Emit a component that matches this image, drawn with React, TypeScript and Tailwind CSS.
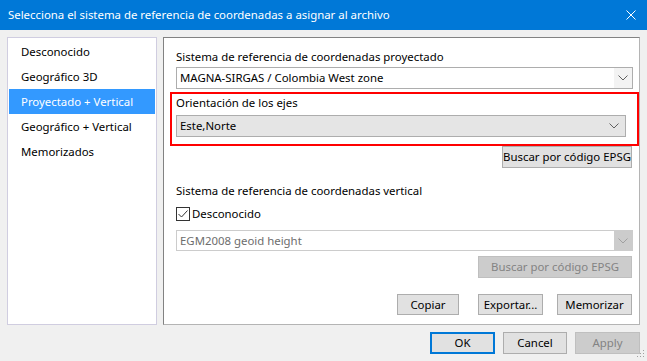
import React from 'react';

const items = ['Desconocido', 'Geográfico 3D', 'Proyectado + Vertical', 'Geográfico + Vertical', 'Memorizados'];

function Chevron({ color = '#606060' }: { color?: string }) {
  return (
    <svg width="10" height="6" viewBox="0 0 10 6" fill="none">
      <path d="M0.5 0.5 L5 5 L9.5 0.5" stroke={color} strokeWidth="1" />
    </svg>
  );
}

function Button({ label, className = '', disabled = false, focused = false }: { label: string; className?: string; disabled?: boolean; focused?: boolean }) {
  return (
    <div
      className={
        'flex items-center justify-center whitespace-nowrap ' +
        (focused ? 'border-2 border-[#0078d7] bg-[#e1e1e1] ' : disabled ? 'border border-[#bfbfbf] bg-[#cccccc] text-[#838383] ' : 'border border-[#adadad] bg-[#e1e1e1] ') +
        className
      }
    >
      {label}
    </div>
  );
}

export default function App() {
  return (
    <div
      className="w-[647px] h-[361px] bg-[#f0f0f0] flex flex-col text-[11.4px] leading-[16px] text-black overflow-hidden whitespace-nowrap"
      style={{ fontFamily: '"Segoe UI", "Noto Sans", sans-serif' }}
    >
      <div className="h-[30px] bg-[#0078d7] flex items-center justify-between pl-[8px] pr-[11px] text-white">
        <span>Selecciona el sistema de referencia de coordenadas a asignar al archivo</span>
        <svg width="10" height="10" viewBox="0 0 10 10">
          <path d="M0.5 0.5 L9.5 9.5 M9.5 0.5 L0.5 9.5" stroke="white" strokeWidth="1" />
        </svg>
      </div>

      <div className="flex gap-[6px] pl-[7px] pt-[7px]">
        {/* left list */}
        <div className="w-[150px] h-[288px] bg-white border border-[#d0cde0] p-[1px] flex flex-col">
          {items.map((it, i) => (
            <div
              key={it}
              className={'h-[25px] flex items-center pl-[12px] ' + (i === 2 ? 'bg-[#3399ff] text-white' : '')}
            >
              {it}
            </div>
          ))}
        </div>

        {/* right panel */}
        <div className="w-[477px] h-[288px] bg-white border border-t-[#828282] border-l-[#828282] border-r-[#b4b4b4] border-b-[#b4b4b4] pl-[12px] pt-[11px] flex flex-col">
          <div>Sistema de referencia de coordenadas proyectado</div>
          <div className="mt-[2px] w-[457px] h-[22px] border border-[#adadad] flex">
            <div className="flex-1 flex items-center pl-[3px] bg-white">MAGNA-SIRGAS / Colombia West zone</div>
            <div className="w-[18px] flex items-center justify-center bg-[#f3f3f3]">
              <Chevron />
            </div>
          </div>

          <div className="mt-[3px] -ml-[6px] w-[469px] h-[54px] border-2 border-[#ff0000] pl-[4px] pt-[1px]">
            <div>Orientación de los ejes</div>
            <div className="mt-[4px] w-[450px] h-[22px] border border-[#adadad] bg-[#e5e5e5] flex items-center justify-between pl-[3px] pr-[6px]">
              <span>Este,Norte</span>
              <Chevron />
            </div>
          </div>

          <div className="flex justify-end w-[456px]">
            <Button label="Buscar por código EPSG" className="w-[130px] h-[22px]" />
          </div>

          <div className="mt-[15px]">Sistema de referencia de coordenadas vertical</div>
          <div className="mt-[7px] flex items-center h-[16px]">
            <div className="w-[14px] h-[14px] border border-[#333333] bg-white flex items-center justify-center">
              <svg width="10" height="8" viewBox="0 0 10 8" fill="none">
                <path d="M0.5 4 L3.5 7 L9.5 0.5" stroke="#333333" strokeWidth="1" />
              </svg>
            </div>
            <span className="ml-[2px]">Desconocido</span>
          </div>

          <div className="mt-[8px] w-[457px] h-[21px] border border-[#cccccc] flex text-[#6d6d6d]">
            <div className="flex-1 flex items-center pl-[3px] bg-white">EGM2008 geoid height</div>
            <div className="w-[18px] flex items-center justify-center bg-[#cccccc]">
              <Chevron color="#a0a0a0" />
            </div>
          </div>

          <div className="mt-[5px] flex justify-end w-[456px]">
            <Button label="Buscar por código EPSG" disabled className="w-[154px] h-[22px]" />
          </div>

          <div className="mt-[16px] flex justify-end gap-[19px] w-[456px]">
            <Button label="Copiar" className="w-[62px] h-[21px]" />
            <div className="flex gap-[14px]">
              <Button label="Exportar..." className="w-[65px] h-[21px]" />
              <Button label="Memorizar" className="w-[75px] h-[21px]" />
            </div>
          </div>
        </div>
      </div>

      <div className="flex justify-end gap-[8px] pr-[7px] mt-[7px]">
        <Button label="OK" focused className="w-[65px] h-[22px]" />
        <Button label="Cancel" className="w-[64px] h-[22px]" />
        <Button label="Apply" disabled className="w-[65px] h-[22px]" />
      </div>
      <div className="flex justify-end pr-[2px] mt-[-4px]">
        <svg width="8" height="8" viewBox="0 0 8 8">
          <rect x="6" y="0" width="1" height="1" fill="#a0a0a0" />
          <rect x="3" y="3" width="1" height="1" fill="#a0a0a0" />
          <rect x="6" y="3" width="1" height="1" fill="#a0a0a0" />
          <rect x="0" y="6" width="1" height="1" fill="#a0a0a0" />
          <rect x="3" y="6" width="1" height="1" fill="#a0a0a0" />
          <rect x="6" y="6" width="1" height="1" fill="#a0a0a0" />
        </svg>
      </div>
    </div>
  );
}
